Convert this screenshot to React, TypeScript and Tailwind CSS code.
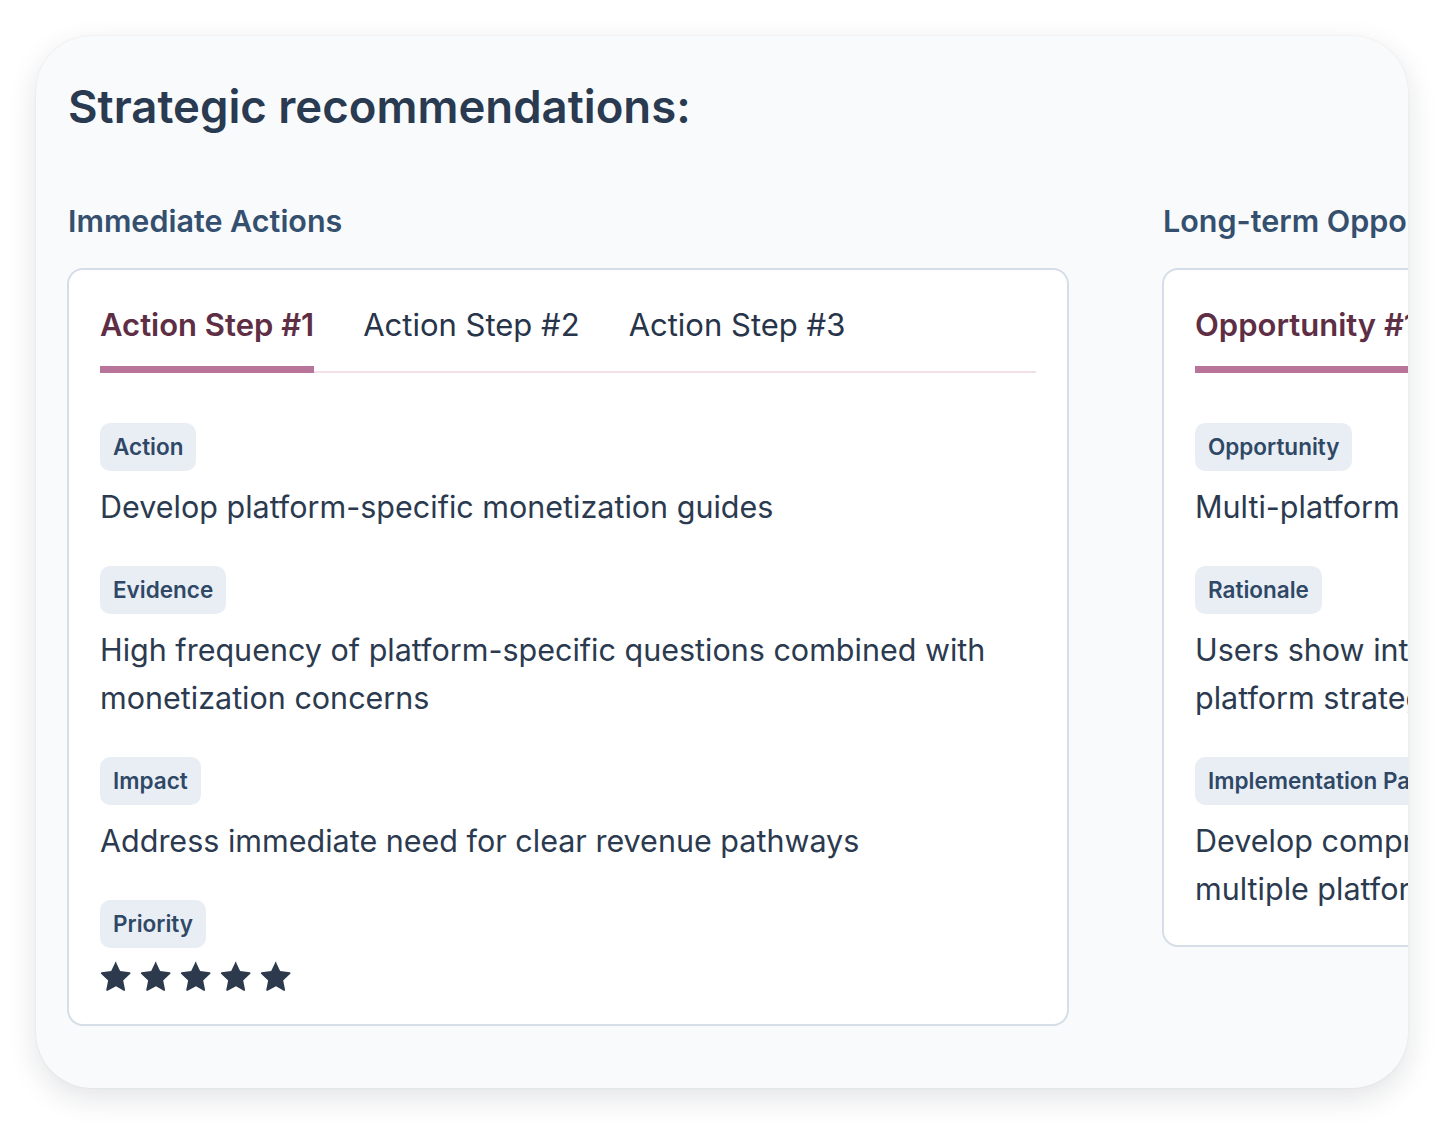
import { useState } from 'react'

type Field = { label: string; text: string }

type Panel = {
  heading: string
  tabs: string[]
  fields: Field[]
  priority?: number
}

const PANELS: Panel[] = [
  {
    heading: 'Immediate Actions',
    tabs: ['Action Step #1', 'Action Step #2', 'Action Step #3'],
    fields: [
      { label: 'Action', text: 'Develop platform-specific monetization guides' },
      { label: 'Evidence', text: 'High frequency of platform-specific questions combined with monetization concerns' },
      { label: 'Impact', text: 'Address immediate need for clear revenue pathways' },
    ],
    priority: 5,
  },
  {
    heading: 'Long-term Opportunities',
    tabs: ['Opportunity #1', 'Opportunity #2', 'Opportunity #3'],
    fields: [
      { label: 'Opportunity', text: 'Multi-platform creator education program' },
      { label: 'Rationale', text: 'Users show interest in diversifying income and building cross-platform strategies' },
      { label: 'Implementation Path', text: 'Develop comprehensive creator education resources covering multiple platforms' },
    ],
  },
]

function StarIcon() {
  return (
    <svg viewBox="0 0 24 24" className="h-8 w-8" fill="currentColor">
      <path d="M12 1.6l3.1 6.6 7.2.9c.6.1.8.8.4 1.2l-5.3 5 1.4 7.1c.1.6-.5 1-1 .7L12 19.6l-6.3 3.5c-.5.3-1.1-.1-1-.7l1.4-7.1-5.3-5c-.4-.4-.2-1.1.4-1.2l7.2-.9L11.5 1.6c.2-.4.8-.4 1 0z" />
    </svg>
  )
}

function Badge({ children }: { children: string }) {
  return (
    <span className="inline-block whitespace-nowrap rounded-[10px] bg-[#e9eef5] px-[13px] text-[22.5px] font-semibold leading-[48px] text-[#2f4866]">
      {children}
    </span>
  )
}

function PanelCard({ panel }: { panel: Panel }) {
  const [active, setActive] = useState(0)
  return (
    <section className="w-[1002px] shrink-0">
      <h2 className="mb-[27px] pl-px text-[30.5px] font-semibold leading-[40px] text-[#35506f]">{panel.heading}</h2>
      <div className="rounded-[16px] border-2 border-[#d5dee8] bg-white px-[31px] pt-8 pb-8">
        <div className="flex gap-[49px] border-b-2 border-[#f2dfe8]">
          {panel.tabs.map((t, i) => (
            <button
              key={t}
              onClick={() => setActive(i)}
              className={
                i === active
                  ? 'whitespace-nowrap border-b-[7px] border-[#b87499] pb-[18px] text-[31px] font-semibold leading-[46px] text-[#5e2e45] -mb-[2px]'
                  : 'whitespace-nowrap border-b-[7px] border-transparent pb-[18px] text-[31px] font-normal leading-[46px] text-[#273449] -mb-[2px]'
              }
            >
              {t}
            </button>
          ))}
        </div>
        <div className="mt-[50px] flex flex-col gap-[35px]">
          {panel.fields.map((f) => (
            <div key={f.label}>
              <Badge>{f.label}</Badge>
              <p className="mt-3 text-[30.5px] leading-[48px] text-[#2b3a4f]">{f.text}</p>
            </div>
          ))}
          {panel.priority ? (
            <div>
              <Badge>Priority</Badge>
              <div className="mt-3 flex gap-2 text-[#2d3a4e]">
                {Array.from({ length: panel.priority }).map((_, i) => (
                  <StarIcon key={i} />
                ))}
              </div>
            </div>
          ) : null}
        </div>
      </div>
    </section>
  )
}

export default function App() {
  return (
    <div className="min-h-screen bg-white p-9" style={{ fontFamily: 'Inter, "Noto Sans", sans-serif' }}>
      <div className="h-[1052px] w-[1372px] overflow-hidden rounded-[56px] bg-[#f8fafc] shadow-[0_10px_30px_rgba(15,23,42,0.12),0_0_2px_rgba(15,23,42,0.08)]">
        <div className="px-[31px] pt-[41px]">
          <h1 className="pl-px text-[45.5px] font-semibold leading-[60px] text-[#2a3a50]">Strategic recommendations:</h1>
          <div className="mt-[64px] flex gap-[93px]">
            {PANELS.map((p) => (
              <PanelCard key={p.heading} panel={p} />
            ))}
          </div>
        </div>
      </div>
    </div>
  )
}
